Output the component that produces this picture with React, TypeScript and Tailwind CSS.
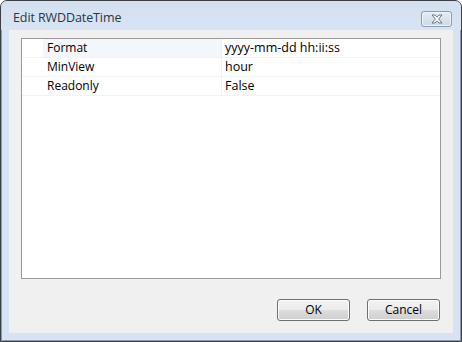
import React from "react";

const rows = [
  { name: "Format", value: "yyyy-mm-dd hh:ii:ss" },
  { name: "MinView", value: "hour" },
  { name: "Readonly", value: "False" },
];

function CloseGlyph() {
  return (
    <svg width="14" height="10" viewBox="0 0 14 10">
      <path
        d="M2 1 L5 1 L7 3.2 L9 1 L12 1 L8.6 5 L12 9 L9 9 L7 6.8 L5 9 L2 9 L5.4 5 Z"
        fill="#ffffff"
        stroke="#5b6675"
        strokeWidth="0.9"
        strokeLinejoin="round"
      />
    </svg>
  );
}

function WinButton({ label }: { label: string }) {
  return (
    <button className="w-[73px] h-[22px] rounded-[3px] border border-[#707070] bg-[linear-gradient(to_bottom,#f2f2f2_0%,#ebebeb_50%,#dddddd_50%,#cfcfcf_100%)] text-[12px] leading-none text-black shadow-[inset_0_0_0_1px_#fcfcfc] flex items-center justify-center">
      {label}
    </button>
  );
}

export default function App() {
  return (
    <div
      className="w-[462px] h-[342px] bg-white"
      style={{ fontFamily: '"Open Sans", "Noto Sans", sans-serif' }}
    >
      <div className="w-full h-full flex flex-col border border-[#3a3f45] rounded-t-[7px] bg-[#d6e3f2] overflow-hidden shadow-[inset_0_0_0_1px_#8d9aab]">
        <div className="h-[29px] flex items-start justify-between bg-[linear-gradient(to_bottom,#d3e0f0,#d8e4f3)]">
          <div className="pl-[12px] pt-[10px] text-[12.5px] leading-[14px] text-[#2a3647] tracking-[-0.1px]">
            Edit RWDDateTime
          </div>
          <div className="mt-[10px] mr-[9px] w-[31px] h-[16px] rounded-[3px] border border-[#8b9bb0] bg-[linear-gradient(to_bottom,#e4ecf6,#cdd9e8)] shadow-[inset_0_0_0_1px_#eef3fa] flex items-center justify-center">
            <CloseGlyph />
          </div>
        </div>
        <div className="flex-1 mx-[8px] mb-[8px] bg-[#f0f0f0] flex flex-col px-[12px] pt-[8px] pb-[12px]">
          <div className="h-[241px] border border-[#9a9a9a] bg-white flex flex-col">
            {rows.map((r, i) => (
              <div key={r.name} className="flex h-[19px] border-b border-[#f0f3f8]">
                <div className="w-[21px] bg-white" />
                <div
                  className={
                    "w-[179px] pl-[4px] flex items-center text-[12px] text-black border-r border-[#eef1f6] " +
                    (i === 0 ? "bg-[#f3f6fb]" : "bg-white")
                  }
                >
                  {r.name}
                </div>
                <div className="flex-1 pl-[3px] flex items-center text-[12.5px] text-black">
                  {r.value}
                </div>
              </div>
            ))}
          </div>
          <div className="mt-[20px] flex justify-end gap-[17px] pr-[1px]">
            <WinButton label="OK" />
            <WinButton label="Cancel" />
          </div>
        </div>
      </div>
    </div>
  );
}
